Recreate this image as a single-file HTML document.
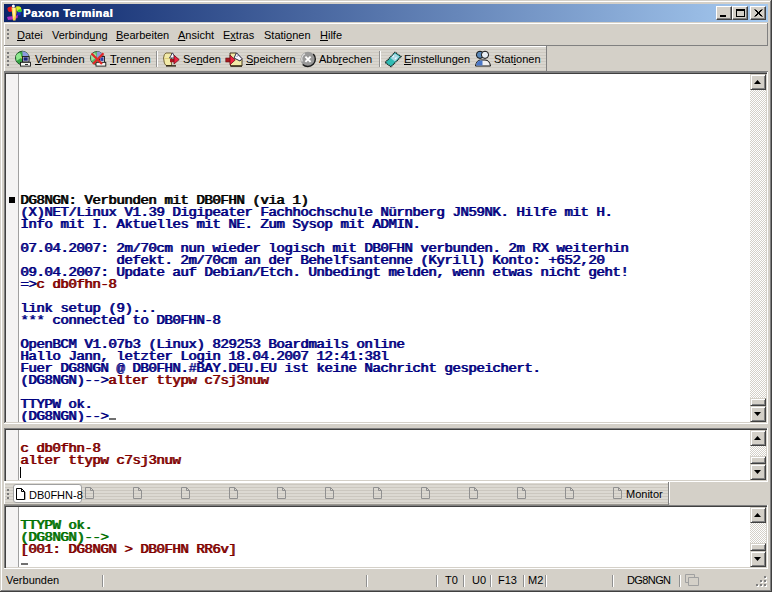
<!DOCTYPE html>
<html><head><meta charset="utf-8">
<style>
*{margin:0;padding:0;box-sizing:border-box}
html,body{width:772px;height:592px;overflow:hidden;background:#d4d0c8}
body{position:relative;font-family:"Liberation Sans",sans-serif;font-size:11px;color:#000}
.a{position:absolute}
.hl{position:absolute;background:#fff}
.sh{position:absolute;background:#808080}
.dk{position:absolute;background:#404040}
.title{left:4px;top:4px;width:764px;height:18px;background:linear-gradient(to right,#0a246a 0%,#a6caf0 100%)}
.ttxt{left:23px;top:5px;font-weight:bold;font-size:11px;letter-spacing:0.65px;text-shadow:0.5px 0 0 #fff;color:#fff;line-height:16px;white-space:nowrap}
.btn{position:absolute;top:6px;width:16px;height:14px;background:#d4d0c8;border-top:1px solid #fff;border-left:1px solid #fff;border-right:1px solid #404040;border-bottom:1px solid #404040;box-shadow:inset -1px -1px 0 #808080}
.mi{position:absolute;top:28px;line-height:14px;white-space:nowrap;font-size:11px}
.tb{position:absolute;top:52px;line-height:14px;white-space:nowrap;font-size:11px}
u{text-decoration:underline;text-underline-offset:1px;text-decoration-thickness:1px}
.term{position:absolute;background:#fff;overflow:hidden}
.gut{position:absolute;left:0;top:0;width:13px;height:100%;background:#f4f3f3;border-right:1px solid #a0a0a0}
pre{position:absolute;font-family:"Liberation Mono",monospace;font-weight:normal;text-shadow:1px 0 0 currentColor;font-size:14px;letter-spacing:-0.4px;line-height:14px;transform:scaleY(0.857);transform-origin:0 0;white-space:pre}
.bl{color:#000080}.rd{color:#800000}.gr{color:#007000}.bk{color:#000}
.sb{position:absolute;width:16px;background-color:#e8e6e2;background-image:repeating-conic-gradient(#d4d0c8 0% 25%,#ffffff 0% 50%);background-size:2px 2px}
.sbtn{position:absolute;left:0;width:16px;height:16px;background:#d4d0c8;border-top:1px solid #d4d0c8;border-left:1px solid #d4d0c8;border-right:1px solid #404040;border-bottom:1px solid #404040;box-shadow:inset 1px 1px 0 #fff,inset -1px -1px 0 #808080}
.sep{position:absolute;width:2px;border-left:1px solid #909090;border-right:1px solid #fff}
.st{position:absolute;top:574px;line-height:13px;white-space:nowrap;font-size:11px}
</style></head><body>
<!-- window frame -->
<div class="hl" style="left:1px;top:1px;width:769px;height:1px"></div>
<div class="hl" style="left:1px;top:1px;width:1px;height:589px"></div>
<div class="sh" style="left:1px;top:590px;width:770px;height:1px"></div>
<div class="sh" style="left:770px;top:1px;width:1px;height:590px"></div>
<div class="dk" style="left:0;top:591px;width:772px;height:1px"></div>
<div class="dk" style="left:771px;top:0;width:1px;height:592px"></div>

<!-- title bar -->
<div class="a title"></div>
<svg class="a" style="left:4px;top:3px" width="20" height="19" viewBox="0 0 20 19">
<path d="M3.5 5 Q5 3 8 3.5 L8.5 8.5 L5 9 Q3 7.5 3.5 5Z" fill="#e81818"/>
<path d="M12 3.5 Q15 2.5 17 4.5 L17.5 8 L15 9.5 L12.5 7.5Z" fill="#d8f020"/>
<path d="M13.5 7 L17.5 6 L17.5 9 L14.5 10Z" fill="#30d030"/>
<path d="M13 9.5 L17 9 L16.5 12.5 L13 12.5Z" fill="#2020c8"/>
<path d="M3 14 Q6 13 10 13.5 L14 12 L13.5 15 Q9 17 4 17Z" fill="#b030c0"/>
<path d="M7.5 4.5 L12 4.5 L12.5 9 L11.5 17.5 L9 17.5 L8 10Z" fill="#f8d040"/>
<path d="M8.5 5 L11 5 L11 12 L9.5 16 Z" fill="#fff0a0"/>
<circle cx="9.4" cy="3.1" r="1.5" fill="#ffffff"/>
</svg>
<div class="a ttxt">Paxon Terminal</div>
<div class="btn" style="left:716px"><div class="a" style="left:3px;top:8px;width:6px;height:2px;background:#000"></div></div>
<div class="btn" style="left:732px"><div class="a" style="left:3px;top:2px;width:9px;height:8px;border:1px solid #000;border-top-width:2px"></div></div>
<div class="btn" style="left:750px"><svg class="a" style="left:3px;top:2px" width="9" height="8" viewBox="0 0 9 8"><path d="M0.5 0.5 L7.5 7.5 M1.5 0.5 L8.5 7.5 M7.5 0.5 L0.5 7.5 M8.5 0.5 L1.5 7.5" stroke="#000" stroke-width="1"/></svg></div>

<!-- menu band -->
<div class="hl" style="left:4px;top:23px;width:764px;height:1px"></div>
<div class="hl" style="left:4px;top:23px;width:1px;height:22px"></div>
<div class="sh" style="left:4px;top:45px;width:764px;height:1px"></div>
<div class="sh" style="left:767px;top:23px;width:1px;height:23px"></div>
<div class="a" style="left:7px;top:29px;width:2px;height:2px;background:#787878"></div>
<div class="a" style="left:7px;top:33px;width:2px;height:2px;background:#787878"></div>
<div class="a" style="left:7px;top:37px;width:2px;height:2px;background:#787878"></div>
<div class="mi" style="left:17px"><u>D</u>atei</div>
<div class="mi" style="left:52px">Verbind<u>u</u>ng</div>
<div class="mi" style="left:116px"><u>B</u>earbeiten</div>
<div class="mi" style="left:178px"><u>A</u>nsicht</div>
<div class="mi" style="left:223px">E<u>x</u>tras</div>
<div class="mi" style="left:264px">Stati<u>o</u>nen</div>
<div class="mi" style="left:320px"><u>H</u>ilfe</div>

<!-- toolbar band -->
<div class="a" style="left:4px;top:47px;width:542px;height:24px;background:repeating-linear-gradient(to bottom,#d9d6cf 0px,#d9d6cf 2px,#cdc9c1 2px,#cdc9c1 3px)"></div>
<div class="hl" style="left:4px;top:46px;width:543px;height:1px"></div>
<div class="hl" style="left:4px;top:46px;width:1px;height:25px"></div>
<div class="sh" style="left:4px;top:71px;width:764px;height:1px"></div>
<div class="sh" style="left:546px;top:46px;width:1px;height:25px"></div>
<div class="a" style="left:7px;top:52px;width:2px;height:2px;background:#787878"></div>
<div class="a" style="left:7px;top:56px;width:2px;height:2px;background:#787878"></div>
<div class="a" style="left:7px;top:60px;width:2px;height:2px;background:#787878"></div>
<div class="a" style="left:7px;top:64px;width:2px;height:2px;background:#787878"></div>

<!-- toolbar icons -->
<svg class="a" style="left:14px;top:50px" width="18" height="18" viewBox="0 0 18 18">
<circle cx="8.3" cy="8" r="6.8" fill="#38a848" stroke="#1a4a20" stroke-width="0.9"/>
<path d="M8.3 1.2 A6.8 6.8 0 0 1 15.1 8 L9 8Z" fill="#8c98e0"/>
<path d="M2 6 Q3 3 6 3 Q8 5 7 8 Q5 9 2.5 11Z" fill="#90e890"/>
<path d="M1.8 7 Q2 9 3 10.5 L2.2 9Z" fill="#70d8e8"/>
<circle cx="8.8" cy="7.5" r="1.6" fill="#e8e850"/>
<rect x="8.5" y="6.5" width="6.5" height="5.5" fill="#dcdcec" stroke="#181818" stroke-width="0.9"/>
<rect x="9.5" y="7.3" width="4.2" height="3.4" fill="#1c2478"/>
<rect x="6.5" y="12.3" width="10" height="3.8" fill="#f4f4f0" stroke="#181818" stroke-width="0.9"/>
<rect x="11" y="14" width="3" height="1" fill="#303030"/>
</svg>
<svg class="a" style="left:89px;top:50px" width="18" height="18" viewBox="0 0 18 18">
<circle cx="8" cy="8" r="6.6" fill="#58b868" stroke="#3a5a40" stroke-width="0.9"/>
<path d="M8 1.4 A6.6 6.6 0 0 1 14.6 8 L8 8Z" fill="#9098d8"/>
<path d="M2 6 Q3 3 6 3 Q8 5 7 8 Q5 9 2.5 11Z" fill="#a0e0a0"/>
<rect x="10.5" y="6.5" width="5" height="6" fill="#e0e0ea" stroke="#181818" stroke-width="0.9"/>
<rect x="11.3" y="7.3" width="3.2" height="3.6" fill="#3040a0"/>
<rect x="7" y="12.3" width="9.8" height="3.8" fill="#f4f4f0" stroke="#181818" stroke-width="0.9"/>
<path d="M2.5 3.5 L13 14 M14.5 3.2 L4 14" stroke="#e02828" stroke-width="2.3"/>
</svg>
<svg class="a" style="left:162px;top:51px" width="18" height="16" viewBox="0 0 18 16">
<path d="M1.5 7 Q2 2.5 4 2 H9.5 V14.5 H4 Q2 13.5 1.5 7Z" fill="#f2eaa8" stroke="#6a5a30" stroke-width="0.9"/>
<path d="M2.2 7.5 H9" stroke="#d8c870" stroke-width="0.8"/>
<path d="M7.5 7 L10.5 1.8 L13.5 7Z" fill="#f8f8ff" stroke="#202040" stroke-width="0.8"/>
<rect x="8" y="8" width="4.2" height="3.2" fill="#a81820"/>
<path d="M12 4.3 L17.2 8.6 L12 13Z" fill="#f02040" stroke="#701018" stroke-width="0.8"/>
<rect x="4" y="14.2" width="10" height="1.4" fill="#2a2010"/>
</svg>
<svg class="a" style="left:225px;top:51px" width="18" height="16" viewBox="0 0 18 16">
<path d="M5 2 H11 L17 8 V15 H5.5Z" fill="#f2eaa8" stroke="#3a2a10" stroke-width="0.9"/>
<path d="M9 7 L11.5 1.8 L17 7.6 L15 10Z" fill="#f8f8ff" stroke="#101030" stroke-width="0.9"/>
<path d="M12 5.5 L13 4.5" stroke="#202060" stroke-width="1"/>
<rect x="0.8" y="7" width="4.6" height="4" fill="#a81820" stroke="#601010" stroke-width="0.6"/>
<path d="M5 4 L10.2 9 L5 13.8Z" fill="#f02040" stroke="#701018" stroke-width="0.8"/>
<rect x="5.5" y="14.4" width="11.5" height="1.3" fill="#2a2010"/>
</svg>
<svg class="a" style="left:300px;top:51px" width="17" height="17" viewBox="0 0 17 17">
<circle cx="8" cy="8.2" r="7.5" fill="#989898"/>
<path d="M2.7 13.5 A7.5 7.5 0 0 0 13.3 2.9" fill="none" stroke="#1a1a1a" stroke-width="1.4"/>
<path d="M2.2 10.5 A6.2 6.2 0 0 1 5 2.8" fill="none" stroke="#e4e4e4" stroke-width="1.3"/>
<path d="M5.4 5.6 L10.6 10.8 M10.6 5.6 L5.4 10.8" stroke="#fff" stroke-width="1.9"/>
</svg>
<svg class="a" style="left:384px;top:51px" width="18" height="17" viewBox="0 0 18 17">
<path d="M1.2 11.5 L11 1.2 L17.2 5.5 L7 15.8Z" fill="#30bcb4" stroke="#101818" stroke-width="1.1" stroke-dasharray="1.3 0.6"/>
<path d="M6.5 7 L11 2.5 L15.5 5.8 L11 10.5Z" fill="#a8d8e4"/>
<path d="M8.5 6 L10 4.5 M11 8 L12.5 6.5" stroke="#f0f8ff" stroke-width="1.2"/>
</svg>
<svg class="a" style="left:474px;top:50px" width="18" height="18" viewBox="0 0 18 18">
<path d="M1.5 16 Q2.5 10 6.5 10 H11 Q15.5 10 16.5 16Z" fill="#f0f0f0" stroke="#101010" stroke-width="1"/>
<path d="M2 15.5 Q3 10.5 6.5 10.5 H8.5 V15.5Z" fill="#4a78c8"/>
<circle cx="6" cy="4.8" r="3.6" fill="#5a88b8" stroke="#101010" stroke-width="1"/>
<circle cx="11" cy="4.8" r="3.6" fill="#e8eef4" stroke="#101010" stroke-width="1"/>
</svg>
<div class="tb" style="left:35px"><u>V</u>erbinden</div>
<div class="tb" style="left:110px"><u>T</u>rennen</div>
<div class="sep" style="left:156px;top:51px;height:16px"></div>
<div class="tb" style="left:183px">Se<u>n</u>den</div>
<div class="tb" style="left:246px"><u>S</u>peichern</div>
<div class="tb" style="left:319px">Abb<u>r</u>echen</div>
<div class="sep" style="left:379px;top:51px;height:16px"></div>
<div class="tb" style="left:404px"><u>E</u>instellungen</div>
<div class="tb" style="left:494px">Stat<u>i</u>onen</div>

<!-- main terminal -->
<div class="sh" style="left:4px;top:72px;width:764px;height:1px"></div>
<div class="sh" style="left:4px;top:72px;width:1px;height:351px"></div>
<div class="dk" style="left:5px;top:73px;width:762px;height:1px"></div>
<div class="dk" style="left:5px;top:73px;width:1px;height:349px"></div>
<div class="hl" style="left:4px;top:423px;width:764px;height:1px"></div>
<div class="hl" style="left:767px;top:72px;width:1px;height:352px"></div>
<div class="term" style="left:6px;top:74px;width:744px;height:348px">
 <div class="gut"></div>
 <div class="a" style="left:3px;top:123px;width:6px;height:6px;background:#000"></div>
<pre style="left:14px;top:121px"><span class="bk">DG8NGN: Verbunden mit DB0FHN (via 1)</span>
<span class="bl">(X)NET/Linux V1.39 Digipeater Fachhochschule Nürnberg JN59NK. Hilfe mit H.
Info mit I. Aktuelles mit NE. Zum Sysop mit ADMIN.

07.04.2007: 2m/70cm nun wieder logisch mit DB0FHN verbunden. 2m RX weiterhin
            defekt. 2m/70cm an der Behelfsantenne (Kyrill) Konto: +652,20
09.04.2007: Update auf Debian/Etch. Unbedingt melden, wenn etwas nicht geht!
=&gt;</span><span class="rd">c db0fhn-8</span><span class="bl">

link setup (9)...
*** connected to DB0FHN-8

OpenBCM V1.07b3 (Linux) 829253 Boardmails online
Hallo Jann, letzter Login 18.04.2007 12:41:38l
Fuer DG8NGN @ DB0FHN.#BAY.DEU.EU ist keine Nachricht gespeichert.
(DG8NGN)--&gt;</span><span class="rd">alter ttypw c7sj3nuw</span><span class="bl">

TTYPW ok.
(DG8NGN)--&gt;</span></pre>
 <div class="a" style="left:103px;top:344px;width:7px;height:2px;background:#707070"></div>
</div>
<div class="sb" style="left:750px;top:74px;height:348px">
 <div class="sbtn" style="top:0"><svg class="a" style="left:3px;top:5px" width="8" height="4"><path d="M3.5 0 L7 4 L0 4Z" fill="#000"/></svg></div>
 <div class="sbtn" style="top:324px;height:8px"></div>
 <div class="sbtn" style="top:332px"><svg class="a" style="left:3px;top:5px" width="8" height="4"><path d="M0 0 L7 0 L3.5 4Z" fill="#000"/></svg></div>
</div>

<!-- input area -->
<div class="sh" style="left:4px;top:428px;width:764px;height:1px"></div>
<div class="sh" style="left:4px;top:428px;width:1px;height:54px"></div>
<div class="dk" style="left:5px;top:429px;width:762px;height:1px"></div>
<div class="dk" style="left:5px;top:429px;width:1px;height:52px"></div>
<div class="hl" style="left:4px;top:481px;width:764px;height:1px"></div>
<div class="hl" style="left:767px;top:428px;width:1px;height:54px"></div>
<div class="term" style="left:6px;top:430px;width:744px;height:50px">
 <div class="gut"></div>
<pre class="rd" style="left:14px;top:13px">c db0fhn-8
alter ttypw c7sj3nuw</pre>
 <div class="a" style="left:14px;top:37px;width:1px;height:11px;background:#000"></div>
</div>
<div class="sb" style="left:750px;top:430px;height:50px">
 <div class="sbtn" style="top:0"><svg class="a" style="left:3px;top:5px" width="8" height="4"><path d="M3.5 0 L7 4 L0 4Z" fill="#000"/></svg></div>
 <div class="sbtn" style="top:26px;height:8px"></div>
 <div class="sbtn" style="top:34px"><svg class="a" style="left:3px;top:5px" width="8" height="4"><path d="M0 0 L7 0 L3.5 4Z" fill="#000"/></svg></div>
</div>

<!-- tab bar -->
<div class="a" style="left:4px;top:482px;width:665px;height:22px;background:repeating-linear-gradient(to bottom,#dcd9d2 0px,#dcd9d2 2px,#cbc7bf 2px,#cbc7bf 3px)"></div>
<div class="hl" style="left:4px;top:482px;width:665px;height:1px"></div>
<div class="hl" style="left:4px;top:482px;width:1px;height:22px"></div>
<div class="a" style="left:4px;top:504px;width:665px;height:1px;background:#9a9790"></div>
<div class="sh" style="left:668px;top:482px;width:1px;height:23px"></div>
<div class="hl" style="left:669px;top:482px;width:1px;height:21px"></div>
<div class="a" style="left:7px;top:489px;width:2px;height:2px;background:#787878"></div>
<div class="a" style="left:7px;top:493px;width:2px;height:2px;background:#787878"></div>
<div class="a" style="left:7px;top:497px;width:2px;height:2px;background:#787878"></div>
<div class="a" style="left:13px;top:484px;width:69px;height:19px;background:#fff;border:1px solid #a0a0a0;border-radius:3px"></div>
<svg class="a" style="left:16px;top:488px" width="11" height="13" viewBox="0 0 11 13"><path d="M1.5 11.5 H9.5 V4 M" fill="none" stroke="#b0b0b0"/><path d="M0.5 0.5 H5.5 L8.5 3.5 V11.5 H0.5Z" fill="#fff" stroke="#000"/><path d="M5.5 0.5 V3.5 H8.5" fill="none" stroke="#000"/></svg>
<div class="a" style="left:29px;top:489px;line-height:13px;font-size:11px">DB0FHN-8</div>
<svg class="a" style="left:85px;top:487px" width="10" height="13" viewBox="0 0 10 13"><path d="M0.5 0.5 H5.5 L8.5 3.5 V11.5 H0.5Z" fill="none" stroke="#909090"/><path d="M5.5 0.5 V3.5 H8.5" fill="none" stroke="#909090"/></svg>
<svg class="a" style="left:133px;top:487px" width="10" height="13" viewBox="0 0 10 13"><path d="M0.5 0.5 H5.5 L8.5 3.5 V11.5 H0.5Z" fill="none" stroke="#909090"/><path d="M5.5 0.5 V3.5 H8.5" fill="none" stroke="#909090"/></svg>
<svg class="a" style="left:181px;top:487px" width="10" height="13" viewBox="0 0 10 13"><path d="M0.5 0.5 H5.5 L8.5 3.5 V11.5 H0.5Z" fill="none" stroke="#909090"/><path d="M5.5 0.5 V3.5 H8.5" fill="none" stroke="#909090"/></svg>
<svg class="a" style="left:229px;top:487px" width="10" height="13" viewBox="0 0 10 13"><path d="M0.5 0.5 H5.5 L8.5 3.5 V11.5 H0.5Z" fill="none" stroke="#909090"/><path d="M5.5 0.5 V3.5 H8.5" fill="none" stroke="#909090"/></svg>
<svg class="a" style="left:277px;top:487px" width="10" height="13" viewBox="0 0 10 13"><path d="M0.5 0.5 H5.5 L8.5 3.5 V11.5 H0.5Z" fill="none" stroke="#909090"/><path d="M5.5 0.5 V3.5 H8.5" fill="none" stroke="#909090"/></svg>
<svg class="a" style="left:325px;top:487px" width="10" height="13" viewBox="0 0 10 13"><path d="M0.5 0.5 H5.5 L8.5 3.5 V11.5 H0.5Z" fill="none" stroke="#909090"/><path d="M5.5 0.5 V3.5 H8.5" fill="none" stroke="#909090"/></svg>
<svg class="a" style="left:373px;top:487px" width="10" height="13" viewBox="0 0 10 13"><path d="M0.5 0.5 H5.5 L8.5 3.5 V11.5 H0.5Z" fill="none" stroke="#909090"/><path d="M5.5 0.5 V3.5 H8.5" fill="none" stroke="#909090"/></svg>
<svg class="a" style="left:421px;top:487px" width="10" height="13" viewBox="0 0 10 13"><path d="M0.5 0.5 H5.5 L8.5 3.5 V11.5 H0.5Z" fill="none" stroke="#909090"/><path d="M5.5 0.5 V3.5 H8.5" fill="none" stroke="#909090"/></svg>
<svg class="a" style="left:469px;top:487px" width="10" height="13" viewBox="0 0 10 13"><path d="M0.5 0.5 H5.5 L8.5 3.5 V11.5 H0.5Z" fill="none" stroke="#909090"/><path d="M5.5 0.5 V3.5 H8.5" fill="none" stroke="#909090"/></svg>
<svg class="a" style="left:517px;top:487px" width="10" height="13" viewBox="0 0 10 13"><path d="M0.5 0.5 H5.5 L8.5 3.5 V11.5 H0.5Z" fill="none" stroke="#909090"/><path d="M5.5 0.5 V3.5 H8.5" fill="none" stroke="#909090"/></svg>
<svg class="a" style="left:565px;top:487px" width="10" height="13" viewBox="0 0 10 13"><path d="M0.5 0.5 H5.5 L8.5 3.5 V11.5 H0.5Z" fill="none" stroke="#909090"/><path d="M5.5 0.5 V3.5 H8.5" fill="none" stroke="#909090"/></svg>
<svg class="a" style="left:613px;top:487px" width="10" height="13" viewBox="0 0 10 13"><path d="M0.5 0.5 H5.5 L8.5 3.5 V11.5 H0.5Z" fill="none" stroke="#909090"/><path d="M5.5 0.5 V3.5 H8.5" fill="none" stroke="#909090"/></svg>

<div class="a" style="left:626px;top:488px;line-height:13px;font-size:11px">Monitor</div>

<!-- monitor area -->
<div class="sh" style="left:4px;top:505px;width:764px;height:1px"></div>
<div class="sh" style="left:4px;top:505px;width:1px;height:64px"></div>
<div class="dk" style="left:5px;top:506px;width:762px;height:1px"></div>
<div class="dk" style="left:5px;top:506px;width:1px;height:62px"></div>
<div class="hl" style="left:4px;top:568px;width:764px;height:1px"></div>
<div class="hl" style="left:767px;top:505px;width:1px;height:64px"></div>
<div class="term" style="left:6px;top:507px;width:744px;height:60px">
 <div class="gut"></div>
<pre style="left:14px;top:13px"><span class="gr">TTYPW ok.
(DG8NGN)--&gt;</span>
<span class="rd">[001: DG8NGN &gt; DB0FHN RR6v]</span>
</pre>
 <div class="a" style="left:15px;top:56px;width:7px;height:2px;background:#707070"></div>
</div>
<div class="sb" style="left:750px;top:507px;height:60px">
 <div class="sbtn" style="top:0"><svg class="a" style="left:3px;top:5px" width="8" height="4"><path d="M3.5 0 L7 4 L0 4Z" fill="#000"/></svg></div>
 <div class="sbtn" style="top:36px;height:8px"></div>
 <div class="sbtn" style="top:44px"><svg class="a" style="left:3px;top:5px" width="8" height="4"><path d="M0 0 L7 0 L3.5 4Z" fill="#000"/></svg></div>
</div>

<!-- status bar -->
<div class="st" style="left:6px">Verbunden</div>
<div class="sep" style="left:102px;top:575px;height:12px"></div>
<div class="sep" style="left:366px;top:575px;height:12px"></div>
<div class="sep" style="left:436px;top:575px;height:12px"></div>
<div class="st" style="left:445px">T0</div>
<div class="sep" style="left:463px;top:575px;height:12px"></div>
<div class="st" style="left:472px">U0</div>
<div class="sep" style="left:490px;top:575px;height:12px"></div>
<div class="st" style="left:498px">F13</div>
<div class="sep" style="left:523px;top:575px;height:12px"></div>
<div class="st" style="left:528px">M2</div>
<div class="sep" style="left:545px;top:575px;height:12px"></div>
<div class="sep" style="left:612px;top:575px;height:12px"></div>
<div class="st" style="left:627px;letter-spacing:-0.6px">DG8NGN</div>
<div class="sep" style="left:679px;top:575px;height:12px"></div>
<svg class="a" style="left:685px;top:574px" width="14" height="12" viewBox="0 0 14 12"><path d="M0.5 0.5 H9.5 V3.5 M0.5 0.5 V8.5 H3.5 M3.5 3.5 H13.5 V11.5 H3.5Z" fill="none" stroke="#a0a0a0"/></svg>
<svg class="a" style="left:756px;top:576px" width="12" height="12" viewBox="0 0 12 12">
<rect x="9" y="1" width="2" height="2" fill="#fff"/><rect x="8" y="0" width="2" height="2" fill="#808080"/>
<rect x="9" y="5" width="2" height="2" fill="#fff"/><rect x="8" y="4" width="2" height="2" fill="#808080"/>
<rect x="5" y="5" width="2" height="2" fill="#fff"/><rect x="4" y="4" width="2" height="2" fill="#808080"/>
<rect x="9" y="9" width="2" height="2" fill="#fff"/><rect x="8" y="8" width="2" height="2" fill="#808080"/>
<rect x="5" y="9" width="2" height="2" fill="#fff"/><rect x="4" y="8" width="2" height="2" fill="#808080"/>
<rect x="1" y="9" width="2" height="2" fill="#fff"/><rect x="0" y="8" width="2" height="2" fill="#808080"/>
</svg>
</body></html>
